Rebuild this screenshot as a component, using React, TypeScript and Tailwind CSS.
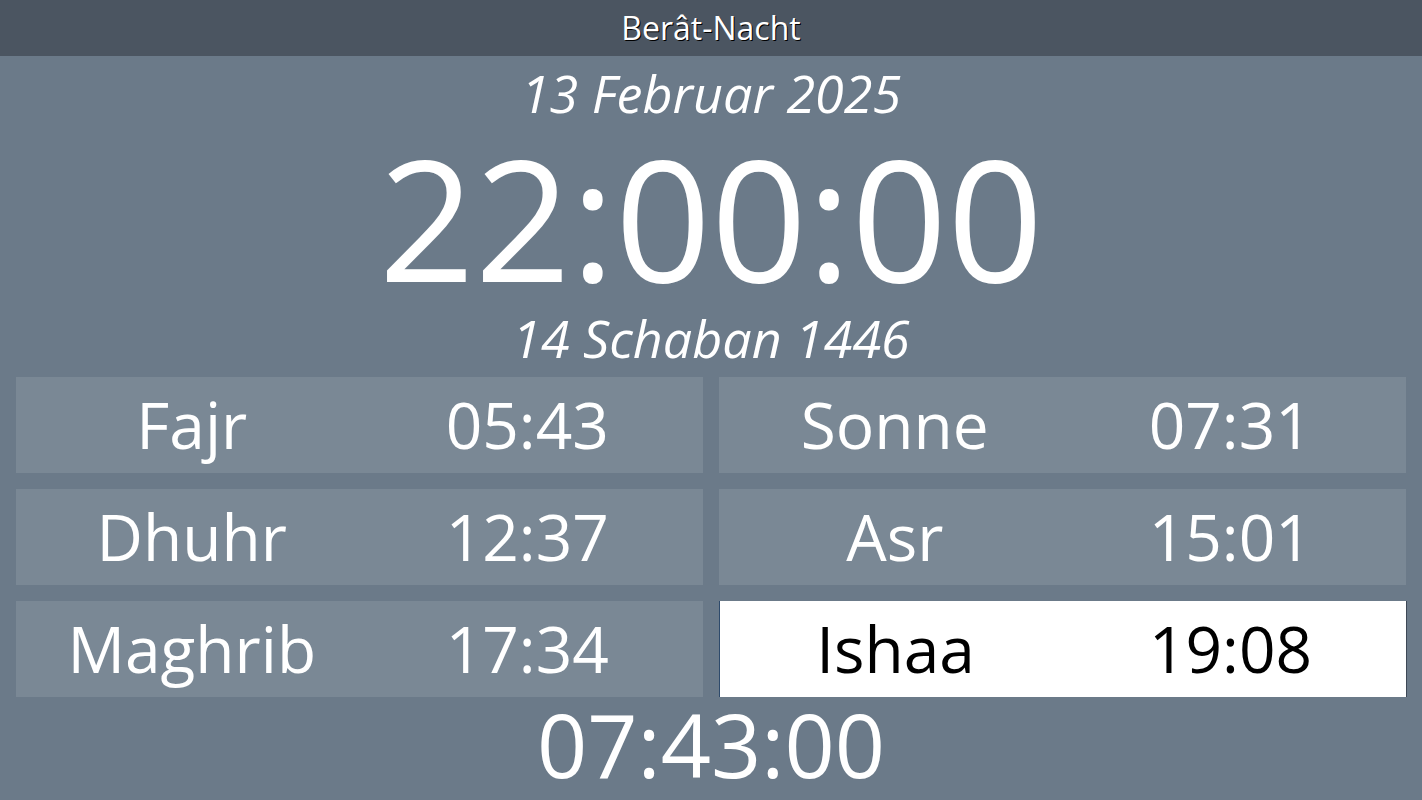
const prayers = [
  { name: 'Fajr', time: '05:43' },
  { name: 'Sonne', time: '07:31' },
  { name: 'Dhuhr', time: '12:37' },
  { name: 'Asr', time: '15:01' },
  { name: 'Maghrib', time: '17:34' },
  { name: 'Ishaa', time: '19:08', active: true },
]

const font = { fontFamily: "'Open Sans', 'Noto Sans', sans-serif" }

export default function App() {
  return (
    <main className="flex h-[800px] w-full flex-col overflow-hidden bg-[#6b7a89] text-white" style={font}>
      <header className="flex h-14 shrink-0 items-center justify-center bg-[#4b5561]">
        <span className="text-[32px] leading-none [text-shadow:1px_1px_0_#000]">Berât-Nacht</span>
      </header>

      <div className="text-center text-[52px] italic leading-[74px]">13 Februar 2025</div>
      <div className="text-center text-[168px] leading-[174px]">22:00:00</div>
      <div className="text-center text-[52px] italic leading-[68px]">14 Schaban 1446</div>

      <section className="mt-[5px] grid grid-cols-2 gap-4 px-4">
        {prayers.map((p) => (
          <div
            key={p.name}
            className={`grid h-[96px] grid-cols-2 items-center px-2 text-center text-[64px] leading-[96px] ${
              p.active
                ? 'border-l border-[#2e4a6b] bg-white text-black shadow-[1px_0_0_#3d4856]'
                : 'bg-[#7a8895] text-white'
            }`}
          >
            <span>{p.name}</span>
            <span>{p.time}</span>
          </div>
        ))}
      </section>

      <div className="text-center text-[88px] leading-[94px]">07:43:00</div>
    </main>
  )
}
